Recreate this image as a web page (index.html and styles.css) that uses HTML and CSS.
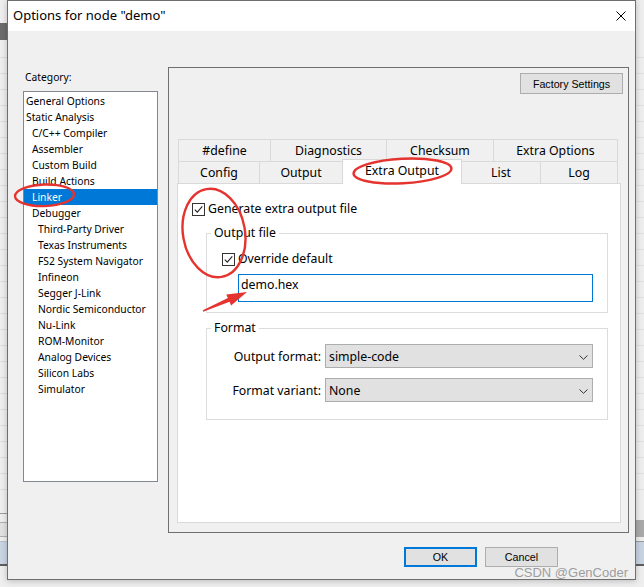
FILE: index.html
```html
<!DOCTYPE html>
<html>
<head>
<meta charset="utf-8">
<link rel="stylesheet" href="styles.css">
</head>
<body>
<div class="dialog">
  <div class="titlebar">
    <span class="title">Options for node "demo"</span>
    <svg class="close" width="10" height="10" viewBox="0 0 10 10"><path d="M0.5 0.5 L9.5 9.5 M9.5 0.5 L0.5 9.5" stroke="#000" stroke-width="1" fill="none"/></svg>
  </div>
  <div class="dlg-body">
    <div class="cat-col">
      <div class="cat-label">Category:</div>
      <ul class="cat-list">
        <li class="l0">General Options</li>
        <li class="l0">Static Analysis</li>
        <li class="l1">C/C++ Compiler</li>
        <li class="l1">Assembler</li>
        <li class="l1">Custom Build</li>
        <li class="l1">Build Actions</li>
        <li class="l1 sel">Linker</li>
        <li class="l1">Debugger</li>
        <li class="l2">Third-Party Driver</li>
        <li class="l2">Texas Instruments</li>
        <li class="l2">FS2 System Navigator</li>
        <li class="l2">Infineon</li>
        <li class="l2">Segger J-Link</li>
        <li class="l2">Nordic Semiconductor</li>
        <li class="l2">Nu-Link</li>
        <li class="l2">ROM-Monitor</li>
        <li class="l2">Analog Devices</li>
        <li class="l2">Silicon Labs</li>
        <li class="l2">Simulator</li>
      </ul>
    </div>
    <div class="panel">
      <div class="factory-row"><div class="btn factory">Factory Settings</div></div>
      <div class="tabctl">
        <div class="tab-row">
          <div class="tab t-define">#define</div>
          <div class="tab t-diag">Diagnostics</div>
          <div class="tab t-check">Checksum</div>
          <div class="tab t-extraopt last">Extra Options</div>
        </div>
        <div class="tab-row">
          <div class="tab t-config">Config</div>
          <div class="tab t-output">Output</div>
          <div class="tab t-extraout active">Extra Output</div>
          <div class="tab t-list nol">List</div>
          <div class="tab t-log last">Log</div>
        </div>
        <div class="tab-page">
          <div class="chk-row first">
            <span class="chk"><svg width="11" height="11" viewBox="0 0 11 11"><path d="M1.8 5.6 L4.3 8.2 L9.3 2.4" stroke="#222" stroke-width="1.1" fill="none"/></svg></span>
            <span class="chk-text">Generate extra output file</span>
          </div>
          <fieldset class="grp grp-out">
            <legend>Output file</legend>
            <div class="chk-row override">
              <span class="chk"><svg width="11" height="11" viewBox="0 0 11 11"><path d="M1.8 5.6 L4.3 8.2 L9.3 2.4" stroke="#222" stroke-width="1.1" fill="none"/></svg></span>
              <span class="chk-text">Override default</span>
            </div>
            <div class="textbox">demo.hex</div>
          </fieldset>
          <fieldset class="grp grp-fmt">
            <legend>Format</legend>
            <div class="form-row">
              <span class="flabel">Output format:</span>
              <div class="combo"><span>simple-code</span><svg class="chev" width="9" height="5" viewBox="0 0 9 5"><path d="M0.5 0.5 L4.5 4.3 L8.5 0.5" stroke="#333" stroke-width="1" fill="none"/></svg></div>
            </div>
            <div class="form-row">
              <span class="flabel">Format variant:</span>
              <div class="combo"><span>None</span><svg class="chev" width="9" height="5" viewBox="0 0 9 5"><path d="M0.5 0.5 L4.5 4.3 L8.5 0.5" stroke="#333" stroke-width="1" fill="none"/></svg></div>
            </div>
          </fieldset>
        </div>
      </div>
    </div>
  </div>
  <div class="btn-row">
    <div class="btn ok">OK</div>
    <div class="btn cancel">Cancel</div>
  </div>
</div>
<div class="watermark">CSDN @GenCoder</div>
<svg class="annot" width="644" height="587" viewBox="0 0 644 587">
  <g fill="none" stroke="#e5342f" stroke-width="2.4">
    <ellipse cx="44.5" cy="195.3" rx="29.5" ry="10.8" transform="rotate(-2 44.5 195.3)"/>
    <ellipse cx="402.5" cy="171" rx="49" ry="12.3" transform="rotate(-3 402.5 171)"/>
    <ellipse cx="214" cy="233" rx="31" ry="44.5" transform="rotate(-10 214 233)"/>
  </g>
  <polygon fill="#e5342f" points="247,292 231.1,305.4 229.5,301.7 203.2,311.8 202.8,310.3 227.9,298.1 226.3,294.4"/>
</svg>
</body>
</html>
```

FILE: styles.css
```css
* { box-sizing: border-box; }

body {
  margin: 0;
  width: 644px;
  height: 587px;
  overflow: hidden;
  position: relative;
  padding-left: 7px;
  font-family: "Noto Sans", "Open Sans", sans-serif;
  color: #000;
  background:
    linear-gradient(#6c6c6c, #6c6c6c) 0 23px / 7px 17px no-repeat,
    linear-gradient(#9c9c9c, #9c9c9c) 0 513px / 7px 1px no-repeat,
    linear-gradient(to bottom, #b0b0b0 0 1px, #e2e2e2 1px 14px, #b0b0b0 14px 15px) 0 522px / 7px 15px no-repeat,
    linear-gradient(to bottom, #b9c3d0 0 1px, #cad5e4 1px 23px, #5e5e5e 23px 24px) 0 541px / 7px 25px no-repeat,
    linear-gradient(#a9a9a9, #a9a9a9) 636px 520px / 8px 17px no-repeat,
    linear-gradient(to bottom, #9a9a9a 0 1px, #c8d3e2 1px 23px, #5e5e5e 23px 24px) 636px 541px / 8px 25px no-repeat,
    repeating-linear-gradient(to bottom, transparent 0 15px, #dcdcdc 15px 16px) 0 42px / 7px 460px no-repeat,
    repeating-linear-gradient(to bottom, transparent 0 15px, #e0e0e0 15px 16px) 636px 42px / 8px 460px no-repeat,
    #eeeeee;
}

.dialog {
  width: 629px;
  height: 580px;
  border: 1px solid #6f6f6f;
  background: #f0f0f0;
  display: flex;
  flex-direction: column;
  box-shadow: 0 1px 6px rgba(0, 0, 0, 0.22);
}

.titlebar {
  flex: none;
  height: 30px;
  background: #fff;
  display: flex;
  justify-content: space-between;
  align-items: flex-start;
  padding: 0 9px 0 5px;
}

.title {
  font-size: 13px;
  line-height: 28px;
  white-space: nowrap;
}

.close { margin-top: 10px; }

.dlg-body {
  flex: none;
  display: flex;
  padding: 36px 6px 0 15px;
}

.cat-col {
  width: 135px;
  padding-top: 3px;
}

.cat-label {
  font-size: 10.3px;
  line-height: 14px;
  padding-left: 2px;
  margin-bottom: 7px;
}

.cat-list {
  list-style: none;
  margin: 0;
  padding: 1px 0 0;
  width: 135px;
  height: 391px;
  border: 1px solid #828790;
  background: #fff;
  font-size: 10.3px;
  line-height: 16px;
}

.cat-list li { height: 16px; white-space: nowrap; }
.l0 { padding-left: 2px; }
.l1 { padding-left: 8px; }
.l2 { padding-left: 14px; }
.cat-list .sel { background: #0078d7; color: #fff; }

.panel {
  width: 461px;
  height: 466px;
  margin-left: 10px;
  border: 1px solid #6f6f6f;
  padding: 5px 0 9px 8px;
  display: flex;
  flex-direction: column;
}

.factory-row {
  display: flex;
  justify-content: flex-end;
  padding-right: 5px;
}

.btn {
  font-family: "Liberation Sans", Arial, sans-serif;
  font-size: 10.7px;
  background: #e1e1e1;
  border: 1px solid #adadad;
  text-align: center;
  color: #000;
  white-space: nowrap;
}

.btn.factory {
  width: 103px;
  height: 21px;
  line-height: 18px;
  padding-top: 1px;
}

.tabctl { margin: 45px 7px 0 0; }

.tab-row {
  display: flex;
  margin-left: 1px;
  width: 440px;
  height: 22px;
}

.tab {
  height: 22px;
  border-left: 1px solid #d9d9d9;
  border-top: 1px solid #d9d9d9;
  text-align: center;
  font-size: 12.3px;
  line-height: 21px;
  white-space: nowrap;
}

.tab.last { border-right: 1px solid #d9d9d9; }
.tab.nol { border-left: none; }

.tab.active {
  background: #fff;
  height: 25px;
  margin-top: -2px;
  margin-bottom: -1px;
  position: relative;
  z-index: 1;
  border-right: 1px solid #d9d9d9;
  line-height: 22px;
}

.t-define { width: 92px; }
.t-diag { width: 116px; }
.t-check { width: 107px; }
.t-extraopt { width: 125px; }
.t-config { width: 81px; }
.t-output { width: 83px; }
.t-extraout { width: 120px; }
.t-list { width: 78px; }
.t-log { width: 78px; }

.tab-page {
  height: 340px;
  background: #fff;
  border: 1px solid #d9d9d9;
  padding-top: 18px;
}

.chk-row {
  display: flex;
  align-items: flex-start;
  gap: 3px;
  font-size: 12.3px;
  line-height: 13px;
  white-space: nowrap;
}

.chk {
  flex: none;
  width: 13px;
  height: 13px;
  margin-top: 1px;
  border: 1px solid #333;
  background: #fff;
  display: flex;
}

.chk-row.first { margin-left: 14px; }

.grp {
  margin: 0 12px 0 28px;
  padding: 0;
  border: 1px solid #dcdcdc;
  min-width: 0;
}

.grp legend {
  font-size: 12.3px;
  line-height: 16px;
  padding: 0 3px;
  margin-left: 4px;
}

.grp-out {
  margin-top: 9px;
  padding-bottom: 10px;
}

.chk-row.override { margin: 11px 0 0 15px; }

.textbox {
  margin: 8px 14px 0 31px;
  height: 28px;
  border: 1px solid #0078d7;
  background: #fff;
  font-size: 12.3px;
  line-height: 20px;
  padding: 0 2px;
}

.grp-fmt {
  margin-top: 7px;
  padding: 8px 0 17px;
}

.form-row {
  display: flex;
  gap: 4px;
  height: 24px;
}

.form-row + .form-row { margin-top: 10px; }

.flabel {
  width: 114px;
  text-align: right;
  font-size: 12.3px;
  line-height: 22px;
  padding-top: 2px;
  white-space: nowrap;
}

.combo {
  width: 268px;
  height: 24px;
  border: 1px solid #adadad;
  background: #e1e1e1;
  display: flex;
  align-items: flex-start;
  justify-content: space-between;
  padding: 1px 4px 0 3px;
  font-size: 12.3px;
  line-height: 21px;
}

.chev { margin-top: 9px; }

.btn-row {
  flex: none;
  display: flex;
  justify-content: flex-end;
  gap: 8px;
  margin-top: 14px;
  padding-right: 77px;
}

.btn.ok, .btn.cancel {
  width: 73px;
  height: 20px;
  line-height: 18px;
}

.btn.ok {
  border: 2px solid #0078d7;
  line-height: 16px;
}

.watermark {
  position: absolute;
  z-index: 10;
  right: 16px;
  top: 565px;
  font-family: "Liberation Sans", Arial, sans-serif;
  font-size: 13px;
  line-height: 15px;
  color: rgba(140, 140, 140, 0.85);
  white-space: nowrap;
}

.annot {
  position: absolute;
  z-index: 20;
  left: 0;
  top: 0;
  pointer-events: none;
}
```
